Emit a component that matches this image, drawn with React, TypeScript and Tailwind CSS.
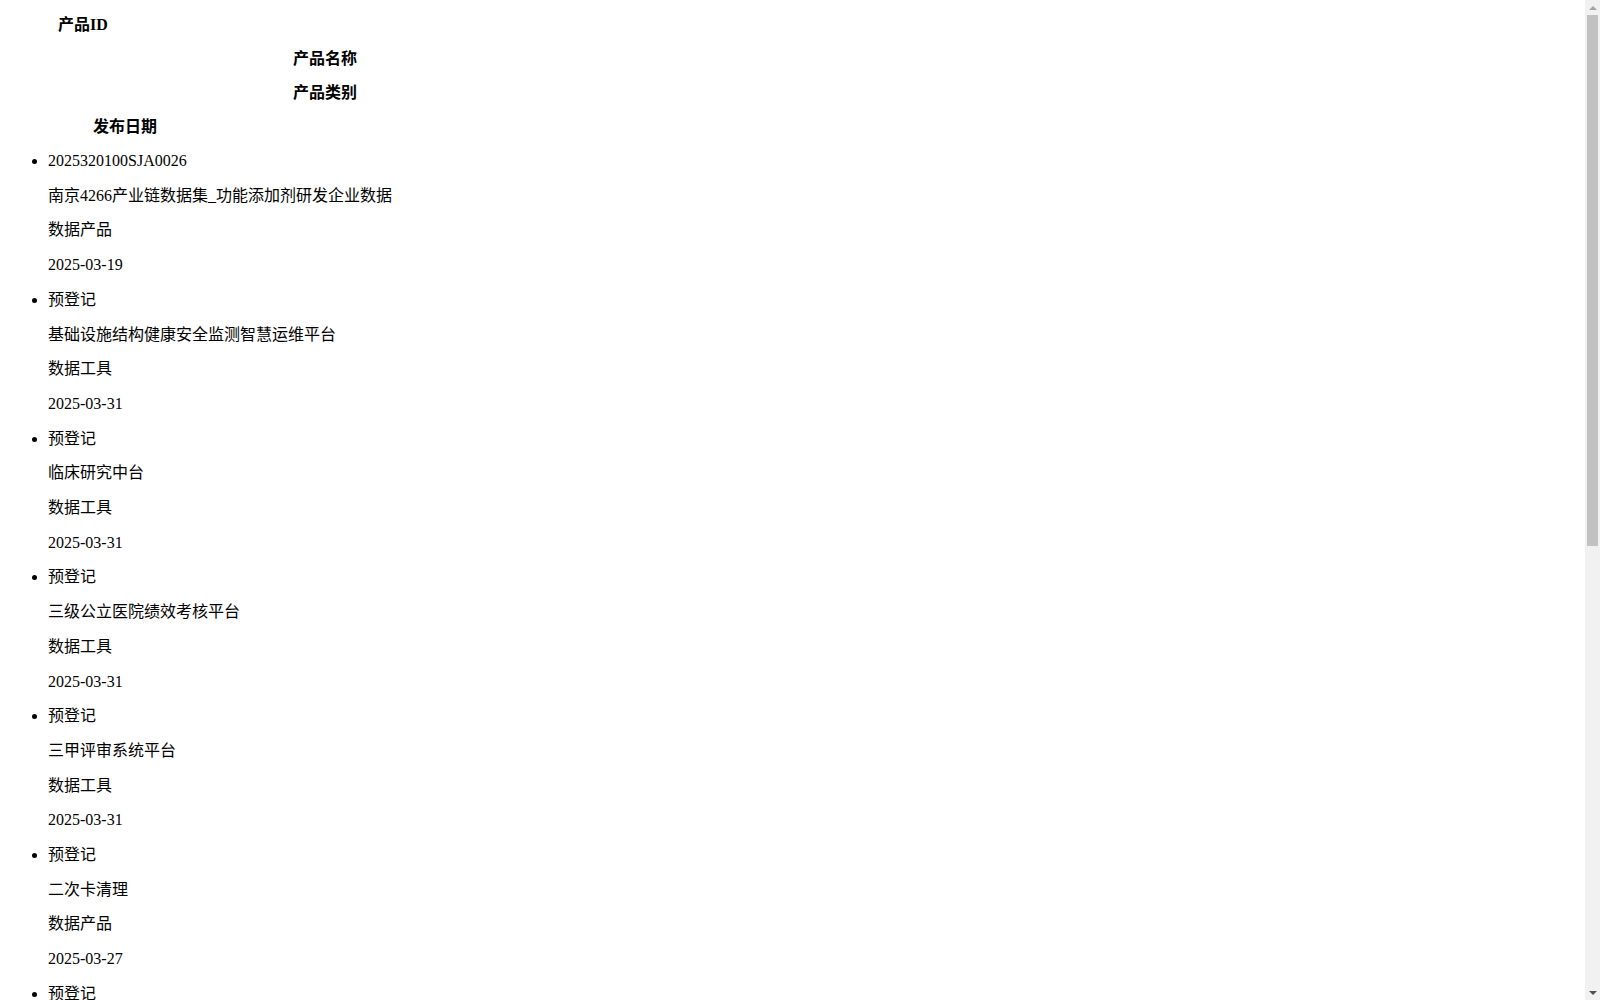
import React from "react";

type Row = { id: string; name: string; cat: string; date: string };

const rows: Row[] = [
  { id: "2025320100SJA0026", name: "南京4266产业链数据集_功能添加剂研发企业数据", cat: "数据产品", date: "2025-03-19" },
  { id: "预登记", name: "基础设施结构健康安全监测智慧运维平台", cat: "数据工具", date: "2025-03-31" },
  { id: "预登记", name: "临床研究中台", cat: "数据工具", date: "2025-03-31" },
  { id: "预登记", name: "三级公立医院绩效考核平台", cat: "数据工具", date: "2025-03-31" },
  { id: "预登记", name: "三甲评审系统平台", cat: "数据工具", date: "2025-03-31" },
  { id: "预登记", name: "二次卡清理", cat: "数据产品", date: "2025-03-27" },
  { id: "预登记", name: "智慧医院运营管理平台", cat: "数据工具", date: "2025-03-27" },
  { id: "预登记", name: "企业信用风险评估数据集", cat: "数据产品", date: "2025-03-26" },
  { id: "预登记", name: "城市交通流量分析数据集", cat: "数据产品", date: "2025-03-25" },
  { id: "预登记", name: "医疗数据治理平台", cat: "数据工具", date: "2025-03-25" },
  { id: "预登记", name: "气象环境监测数据集", cat: "数据产品", date: "2025-03-24" },
  { id: "预登记", name: "数据资产管理平台", cat: "数据工具", date: "2025-03-20" },
];

function Scrollbar() {
  return (
    <div className="flex h-screen w-[15px] shrink-0 flex-col bg-[#f1f1f1]">
      <div className="flex h-[15px] shrink-0 items-center justify-center">
        <svg width="8" height="4" viewBox="0 0 8 4">
          <polygon points="4,0 8,4 0,4" fill="#a3a3a3" />
        </svg>
      </div>
      <div className="flex-1">
        <div className="mx-[2px] h-[531px] bg-[#c1c1c1]" />
      </div>
      <div className="flex h-[15px] shrink-0 items-center justify-center">
        <svg width="8" height="4" viewBox="0 0 8 4">
          <polygon points="0,0 8,0 4,4" fill="#505050" />
        </svg>
      </div>
    </div>
  );
}

export default function App() {
  return (
    <div className="flex h-screen overflow-hidden bg-white">
      <div className="h-screen flex-1 overflow-hidden">
        <div
          className="flow-root px-2 text-[16px] text-black"
          style={{ fontFamily: '"Liberation Serif", "Noto Sans CJK SC", serif' }}
        >
          <div className="font-bold leading-[18px]">
            <p className="my-4 pl-[50px]">产品ID</p>
            <p className="my-4 pl-[285px]">产品名称</p>
            <p className="my-4 pl-[285px]">产品类别</p>
            <p className="my-4 pl-[85px]">发布日期</p>
          </div>
          <ul className="my-4 list-disc pl-10 leading-[18.7px]">
            {rows.map((r, i) => (
              <li key={i}>
                <p className="my-4">{r.id}</p>
                <p className="my-4">{r.name}</p>
                <p className="my-4">{r.cat}</p>
                <p className="my-4">{r.date}</p>
              </li>
            ))}
          </ul>
        </div>
      </div>
      <Scrollbar />
    </div>
  );
}
